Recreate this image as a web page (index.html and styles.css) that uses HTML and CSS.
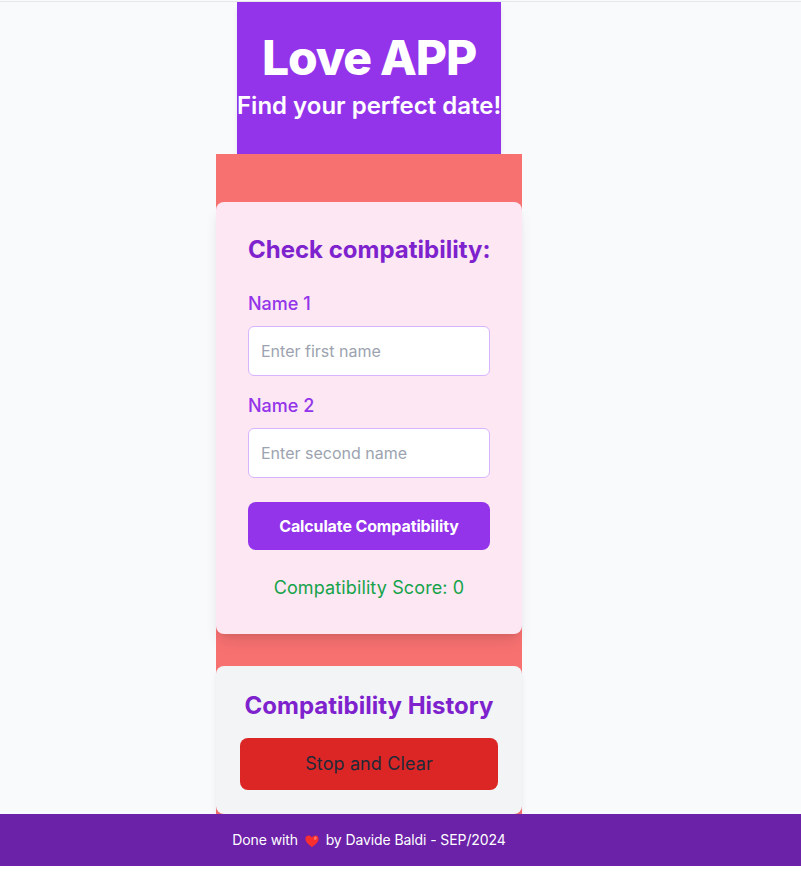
FILE: index.html
```html
<!DOCTYPE html>
<html lang="en">
<head>
<meta charset="utf-8">
<title>Love APP</title>
<link rel="stylesheet" href="styles.css">
</head>
<body>
<div class="page">
  <header class="header">
    <h1 class="title">Love APP</h1>
    <h2 class="subtitle">Find your perfect date!</h2>
  </header>
  <main class="main">
    <section class="card">
      <h2 class="heading">Check compatibility:</h2>
      <label class="label" for="n1">Name 1</label>
      <input class="input" id="n1" placeholder="Enter first name">
      <label class="label" for="n2">Name 2</label>
      <input class="input" id="n2" placeholder="Enter second name">
      <button class="calculate">Calculate Compatibility</button>
      <p class="score">Compatibility Score: 0</p>
    </section>
    <section class="history">
      <h2 class="heading history-heading">Compatibility History</h2>
      <button class="clear">Stop and Clear</button>
    </section>
  </main>
</div>
<footer class="footer">
  <p class="credit">Done with <svg class="heart" viewBox="0 0 16 16"><path d="M8 15C5 13 .5 9.500 .5 5.500C.5 1 6 .5 8 4C10 .5 15.500 1 15.500 5.500C15.500 9.500 11 13 8 15Z" fill="#f92f2f"/><ellipse cx="11.800" cy="4.800" rx="1.500" ry="2" fill="#ff7469" transform="rotate(25 11.800 4.800)"/></svg> by Davide Baldi - SEP/2024</p>
</footer>
</body>
</html>
```
FILE: styles.css
```css
* { box-sizing: border-box; margin: 0; }
body { font-family: Inter, sans-serif; line-height: 24px; background: #fff; }
.page { width: 801px; height: 814px; padding: 1px 63px 0 0; background: linear-gradient(#e5e7eb, #e5e7eb) 0 1px / 100% 1px no-repeat #f9fafb; display: flex; flex-direction: column; align-items: center; }
.header { width: 264px; height: 152px; margin-top: 1px; padding-top: 32px; background: #9333ea; color: #fff; text-align: center; white-space: nowrap; box-shadow: 0 4px 6px -1px rgba(0,0,0,.1); }
.title { font-size: 48px; line-height: 48px; font-weight: 800; letter-spacing: -1.2px; }
.subtitle { margin-top: 8px; font-size: 24px; line-height: 32px; font-weight: 600; }
.main { width: 306px; height: 660px; padding-top: 48px; background: #f87171; }
.card { height: 432px; padding: 32px; background: #fce7f3; border-radius: 8px; box-shadow: 0 10px 15px -3px rgba(0,0,0,.1), 0 4px 6px -4px rgba(0,0,0,.1); }
.heading { margin-bottom: 24px; font-size: 24px; line-height: 32px; font-weight: 700; color: #7e22ce; text-align: center; white-space: nowrap; }
.label { display: block; margin-bottom: 8px; font-size: 18px; line-height: 28px; font-weight: 500; color: #9333ea; }
.input { display: block; width: 100%; height: 50px; margin-bottom: 16px; padding: 12px; border: 1px solid #d8b4fe; border-radius: 6px; background: #fff; font: 16px/24px Inter, sans-serif; }
.input::placeholder { color: #9ca3af; }
.calculate { display: block; width: 100%; height: 48px; margin: 24px 0; border: 0; border-radius: 8px; background: #9333ea; color: #fff; font: 700 16px/24px Inter, sans-serif; letter-spacing: -.12px; }
.score { color: #16a34a; font-size: 18px; line-height: 28px; font-weight: 400; letter-spacing: .12px; text-align: center; }
.history { height: 148px; margin-top: 32px; padding: 24px; background: #f3f4f6; border-radius: 8px; box-shadow: 0 4px 6px -1px rgba(0,0,0,.1); }
.history-heading { margin: 0 -10px 16px; }
.clear { display: block; width: 100%; height: 52px; border: 0; border-radius: 8px; background: #dc2626; color: #1f2937; font: 400 18px/28px Inter, sans-serif; letter-spacing: .12px; }
.footer { position: relative; height: 52px; padding: 16px 63px 16px 0; background: #6b21a8; color: #fff; text-align: center; }
.credit { font-size: 14px; line-height: 20px; letter-spacing: -.1px; }
.heart { width: 14px; height: 14px; margin: 0 3px; vertical-align: -3px; }
```
